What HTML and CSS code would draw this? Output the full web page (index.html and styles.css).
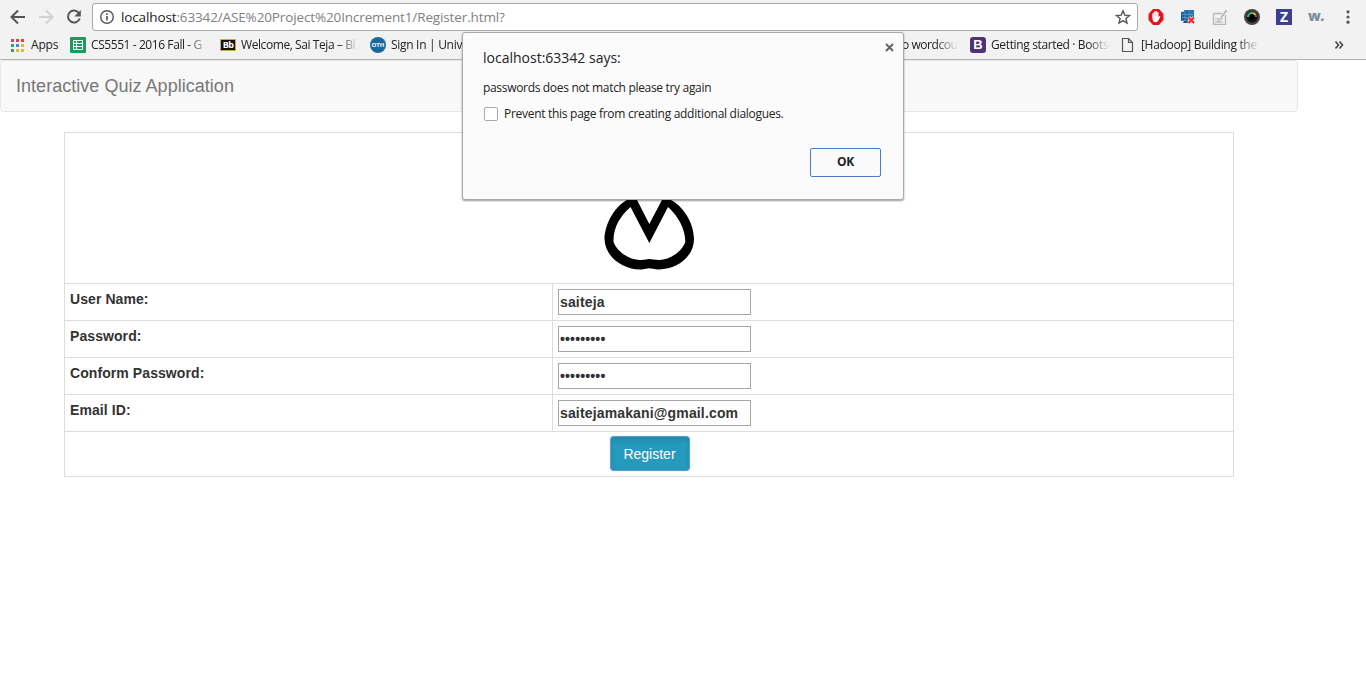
FILE: index.html
```
<!DOCTYPE html>
<html lang="en">
<head>
<meta charset="utf-8">
<title>Interactive Quiz Application</title>
<link rel="stylesheet" href="styles.css">
</head>
<body>
<header class="browser">
  <div class="toolbar">
    <svg class="nav-icons" width="92" height="34" fill="none" stroke-width="2">
      <path d="M25 17H11.500M18 10.500L11.500 17L18 23.500" stroke="#555"/>
      <path d="M39 17H52.500M46 10.500L52.500 17L46 23.500" stroke="#d2d2d2"/>
      <path d="M79 13.200A6 6 0 1 0 79.700 18.500" stroke="#555"/>
      <path d="M80.800 10V16.500H74.300Z" fill="#555"/>
    </svg>
    <div class="address">
      <svg width="16" height="16" viewBox="0 0 16 16" fill="none" stroke="#555"><circle cx="8" cy="8" r="6.300" stroke-width="1.400"/><path d="M8 7V11.500M8 4.300V5.900" stroke-width="1.600"/></svg>
      <span class="url"><b>localhost</b>:63342/ASE%20Project%20Increment1/Register.html?</span>
      <svg class="star" width="16" height="16" viewBox="0 0 16 16" fill="none" stroke="#555" stroke-width="1.400"><path d="M8 1.800L9.800 6.100L14.500 6.500L10.900 9.500L12 14.100L8 11.600L4 14.100L5.100 9.500L1.500 6.500L6.200 6.100Z"/></svg>
    </div>
    <div class="extensions">
      <svg width="16" height="16" viewBox="0 0 16 16"><path d="M5 0H11L15.500 5V11L11 16H5L.5 11V5Z" fill="#e3141c"/><path d="M4.300 7.500V4.500Q5 3.500 5.700 4.500V3Q6.500 2 7.300 3V2.300Q8.200 1.400 9 2.300V3.500Q9.800 2.600 10.500 3.500V8L11.600 7Q12.700 7 12 8.500L10 12Q8 14.300 5.500 12.500Q4.300 11 4.300 7.500Z" fill="#fff"/><path d="M5.800 4V7.500M7.400 3V7.500M9 3V7.500" stroke="#e99" stroke-width=".5"/></svg>
      <svg width="16" height="16" viewBox="0 0 16 16"><path d="M4 1L14 1V10L4 10Z" fill="#2577b5"/><path d="M1 3L10 2V11L1 12Z" fill="#1c6199"/><path d="M2 5.500H13M2 8.500H12M5 2V11M9 2V11" stroke="#62a7d7" stroke-width=".7"/><path d="M4 12L8 11L9 14H3Z" fill="#255378"/><path d="M8.500 8.500L14 14M14 8.500L8.500 14" stroke="#f6dede" stroke-width="3.600"/><path d="M8.500 8.500L14 14M14 8.500L8.500 14" stroke="#ee2733" stroke-width="2"/></svg>
      <svg width="16" height="16" viewBox="0 0 16 16" fill="none" stroke="#b7b7b7"><path d="M1.500 4.500H10M1.500 4.500V15.500H13.500V6" stroke-width="1.300"/><path d="M3 10H7M3 13H6L11 9H8L5 13H11" /><path d="M9 8L14 1L15 2L10 8Z" fill="#c3c3c3"/></svg>
      <svg width="16" height="16" viewBox="0 0 16 16"><circle cx="8" cy="8" r="8" fill="#444"/><circle cx="8" cy="8" r="5.500" fill="#111"/><g fill="none" stroke-width="2"><path d="M4 8A4 4 0 0 1 6 4.500" stroke="#28c7b9"/><path d="M6 4.500A4 4 0 0 1 9 4.100" stroke="#65bf48"/><path d="M9 4.100A4 4 0 0 1 11.500 6" stroke="#e7cf2c"/><path d="M11.500 6A4 4 0 0 1 12 8" stroke="#c74632"/></g><circle cx="8" cy="8" r="2.700"/></svg>
      <span class="z-icon">Z</span>
      <span class="w-icon">w.</span>
      <svg width="16" height="16" viewBox="0 0 16 16" fill="#555"><circle cx="8" cy="2.800" r="1.600"/><circle cx="8" cy="8" r="1.600"/><circle cx="8" cy="13.200" r="1.600"/></svg>
    </div>
  </div>
  <nav class="bookmarks">
    <div class="apps">
      <svg width="13" height="13"><path d="M0 1.500H13" stroke="#d94745" stroke-width="3" stroke-dasharray="3 2"/><path d="M0 6.500H3" stroke="#34a062" stroke-width="3"/><path d="M5 6.500H8" stroke="#4285dc" stroke-width="3"/><path d="M10 6.500H13M5 11.500H8M10 11.500H13" stroke="#eab42f" stroke-width="3"/><path d="M0 11.500H3" stroke="#34a062" stroke-width="3"/></svg>
      <span>Apps</span>
    </div>
    <div class="bookmark">
      <svg width="16" height="16"><rect width="16" height="16" rx="1" fill="#1b9b5e"/><path d="M3.500 3.500H12.500V12.500H3.500ZM3.500 6.500H12.500M3.500 9.500H12.500M6.500 3.500V12.500" fill="none" stroke="#fff"/></svg>
      <span class="title sheets">CS5551 - 2016 Fall - G</span>
    </div>
    <div class="bookmark"><span class="bb">Bb</span><span class="title welcome">Welcome, Sai Teja – Bl</span></div>
    <div class="bookmark"><span class="oth">OTH</span><span class="title signin">Sign In | Unive</span></div>
    <div class="bookmark-gap"></div>
    <div class="bookmark end"><span class="title wordcount">o wordcou</span></div>
    <div class="bookmark"><span class="boot">B</span><span class="title getting">Getting started · Boots</span></div>
    <div class="bookmark">
      <svg width="16" height="16" fill="none" stroke="#555" stroke-width="1.200"><path d="M2.500 1.500H8.500L12.500 5.500V14.500H2.500ZM8.500 1.500V5.500H12.500"/></svg>
      <span class="title hadoop">[Hadoop] Building the</span>
    </div>
    <svg class="more" width="11" height="10" fill="none" stroke="#444" stroke-width="1.600"><path d="M1.500 1.500L4.500 5L1.500 8.500M5.500 1.500L8.500 5L5.500 8.500"/></svg>
  </nav>
</header>

<main>
  <div class="navbar">Interactive Quiz Application</div>
  <form class="register">
    <div class="logo-row">
      <svg width="90" height="72" viewBox="604 198 90 72"><path d="M632 198C615 203 604.500 225 604.500 239C605 257 623 269.500 640 269.500C645 269.500 647 268.300 649 268.300C651 268.300 654 269.500 659 269.500C677 269 694 257 694 239C694 221 681 203 666.500 198H663L649.300 224L636 198Z"/><path d="M630.500 207C620 216 613 228 613.500 242C617 252 630 260 640 260C645 260 647 259 649 259C652 259 655 260 659 260C669 260 682 252 685.300 242C685.500 229 678 216 668 207L649.300 243Z" fill="#fff"/></svg>
    </div>
    <div class="field"><label>User Name:</label><div><span class="input">saiteja</span></div></div>
    <div class="field"><label>Password:</label><div><span class="input">•••••••••</span></div></div>
    <div class="field"><label>Conform Password:</label><div><span class="input">•••••••••</span></div></div>
    <div class="field"><label>Email ID:</label><div><span class="input">saitejamakani@gmail.com</span></div></div>
    <div class="submit-row"><button type="button" class="submit">Register</button></div>
  </form>
</main>

<section class="dialog">
  <svg class="close" width="9" height="9"><path d="M1 1L8 8M8 1L1 8" stroke="#666" stroke-width="2"/></svg>
  <div class="dialog-title">localhost:63342 says:</div>
  <div class="message">passwords does not match please try again</div>
  <div class="prevent"><i class="box"></i><span>Prevent this page from creating additional dialogues.</span></div>
  <button type="button" class="ok">OK</button>
</section>
</body>
</html>
```
FILE: styles.css
```
* { box-sizing: border-box; }
body { margin: 0; height: 689px; overflow: hidden; background: #fff; color: #333; font: 14px/20px "Liberation Sans", Arial, sans-serif; }
svg { display: block; flex: none; }

.browser { height: 60px; background: #f2f2f2; border-bottom: 1px solid #b2b2b2; font-family: "Open Sans", "Noto Sans", sans-serif; }
.toolbar { display: flex; height: 34px; }
.address { display: flex; align-items: center; width: 1046px; height: 28px; margin-top: 3px; padding: 0 6px; background: #fff; border: 1px solid #a9a9a9; border-radius: 3px; }
.url { margin-left: 6px; color: #808080; font-size: 13.500px; letter-spacing: -0.130px; white-space: nowrap; }
.url b { color: #222; font-weight: 400; }
.star { margin-left: auto; }
.extensions { display: flex; gap: 16px; padding: 9px 0 0 10px; }
.z-icon { width: 16px; height: 16px; background: #3c3f91; color: #fff; font: bold 14px/16px "Open Sans", sans-serif; text-align: center; }
.w-icon { width: 16px; height: 16px; color: #82909a; font: 800 14px/13px "Open Sans", sans-serif; letter-spacing: -0.500px; }

.bookmarks { display: flex; align-items: center; height: 22px; padding-left: 11px; color: #222; font-size: 12px; line-height: 22px; }
.apps { display: flex; align-items: center; gap: 7px; width: 59px; letter-spacing: -0.200px; }
.bookmark { display: flex; align-items: center; gap: 5px; width: 150px; flex: none; }
.bookmark.end { justify-content: flex-end; padding-right: 12px; }
.bookmark-gap { width: 300px; flex: none; }
.title { width: 118px; overflow: hidden; white-space: nowrap; letter-spacing: -0.320px; -webkit-mask-image: linear-gradient(to right, #000 82%, transparent); mask-image: linear-gradient(to right, #000 82%, transparent); }
.sheets, .welcome { letter-spacing: -0.420px; }
.signin { letter-spacing: -0.300px; }
.wordcount { width: 56px; letter-spacing: -0.450px; -webkit-mask-image: linear-gradient(to right, #000 60%, transparent); mask-image: linear-gradient(to right, #000 60%, transparent); }
.getting { letter-spacing: -0.360px; }
.bb { width: 16px; height: 12px; border: 1px solid #c6a752; background: #111; color: #fff; font: bold 9px/9px "Open Sans", sans-serif; text-align: center; letter-spacing: -0.500px; }
.oth { width: 16px; height: 16px; border-radius: 50%; background: #176a9f; color: #fff; font: bold 6px/16px "Open Sans", sans-serif; text-align: center; }
.boot { width: 16px; height: 16px; border-radius: 3px; background: #4e3476; color: #fff; font: bold 13px/16px "Liberation Sans", sans-serif; text-align: center; }
.more { margin-left: 64px; }

.navbar { width: 1298px; height: 52px; padding: 15px; border: 1px solid #e7e7e7; border-radius: 4px; background: #f8f8f8; color: #777; font-size: 18px; line-height: 20px; letter-spacing: 0.030px; }
.register { width: 1170px; margin: 20px 0 0 64px; border: 1px solid #ddd; }
.logo-row { display: flex; justify-content: center; align-items: flex-end; height: 151px; padding-bottom: 13px; border-bottom: 1px solid #ddd; }
.field { display: grid; grid-template-columns: 488px 1fr; height: 37px; border-bottom: 1px solid #ddd; font-weight: bold; }
.field label { padding: 5px; border-right: 1px solid #ddd; letter-spacing: 0.080px; }
.field > div { padding: 5px; }
.input { display: block; width: 193px; height: 26px; padding: 2px 1px; border: 1px solid #a6a6a6; background: #fff; letter-spacing: 0.150px; }
.submit-row { display: flex; justify-content: center; padding: 4px 0; height: 44px; }
.submit { width: 80px; height: 35px; margin-left: 1px; padding: 0; border: 1px solid #5e9bd8; border-radius: 4px; background: #269abc; color: #fff; font: 14px/20px "Liberation Sans", sans-serif; box-shadow: inset 0 3px 5px rgba(0,0,0,.125), 0 0 1px #77aef0; }

.dialog { position: absolute; left: 462px; top: 32px; width: 442px; height: 168px; padding: 15px 22px 0 20px; border: 1px solid #aaa; border-radius: 3px; background: #fbfbfb; box-shadow: 0 1px 2px rgba(0,0,0,.4); color: #222; font: 12px/20px "Open Sans", sans-serif; white-space: nowrap; }
.close { position: absolute; right: 9px; top: 10px; }
.dialog-title { font-size: 14px; }
.message { margin-top: 10px; letter-spacing: -0.320px; }
.prevent { display: flex; align-items: center; gap: 6px; margin: 6px 0 0 1px; letter-spacing: -0.290px; }
.box { width: 14px; height: 14px; border: 1px solid #aaa; border-radius: 2px; background: #fff; }
.ok { display: block; width: 71px; height: 29px; margin: 24px 0 0 auto; padding: 0 0 2px; border: 1px solid #4a7cc9; border-radius: 2px; background: #fafafa; color: #222; font: bold 12px/20px "Open Sans", sans-serif; letter-spacing: -0.300px; }
```
